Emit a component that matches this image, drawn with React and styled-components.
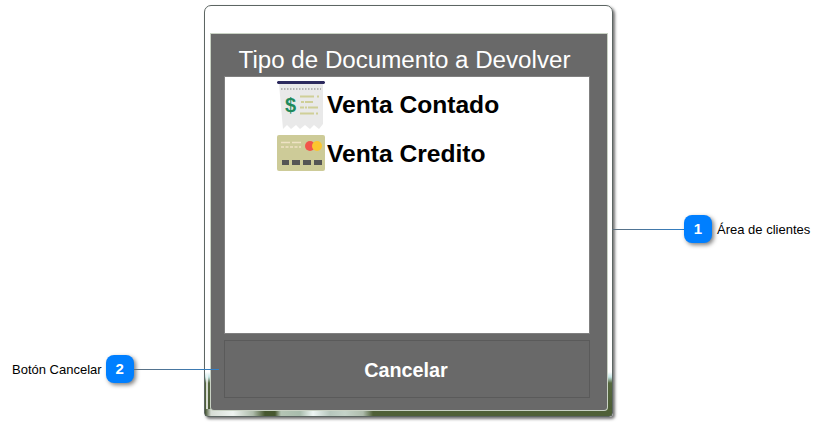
import React from "react";
import styled, { createGlobalStyle } from "styled-components";

const Global = createGlobalStyle`
  html, body { margin: 0; padding: 0; background: #fff; }
  body { font-family: "Liberation Sans", Arial, sans-serif; }
`;

const Stage = styled.div`
  position: relative;
  width: 827px;
  height: 426px;
  overflow: hidden;
  padding: 5px 0 0 204px;
  box-sizing: border-box;
`;

const Win = styled.div`
  position: relative;
  box-sizing: border-box;
  width: 409px;
  height: 412px;
  border: 1px solid #5d6663;
  border-radius: 7px 7px 4px 4px;
  box-shadow: 2px 2px 3px rgba(0, 0, 0, 0.55);
  padding: 28px 5px 6px 6px;
  background-repeat: no-repeat;
  background-image:
    linear-gradient(90deg,
      #3f4f2c 0, #d6dcd4 6px, #eef3f0 28px, #aebcab 48px, #46572f 60px, #46572f 70px,
      #b4c4b4 76px, #a8bcac 95px, #eef6f4 108px, #b6c6bc 125px, #c4d2c8 140px, #aebcac 158px,
      #4f6037 168px, #4f6037 100%),
    linear-gradient(180deg, rgba(255,255,255,0) 0, rgba(255,255,255,0) 366px, rgba(255,255,255,0.75) 372px, rgba(255,255,255,0.8) 100%),
    linear-gradient(180deg, #fff 0, #fff 366px, #c8e6e6 371px, #56683f 377px, #4a5a34 100%);
  background-size: 100% 7px, 2px 100%, 100% 100%;
  background-position: 0 100%, 1px 0, 0 0;
`;

const Panel = styled.div`
  box-sizing: border-box;
  height: 376px;
  background: #696969;
  padding: 0 17px 12px 13px;
  display: flex;
  flex-direction: column;
  border-radius: 0 0 3px 3px;
  box-shadow: 0 0 0 1px #c9d2c4;
`;

const Title = styled.div`
  height: 42px;
  line-height: 52px;
  margin-left: -5px;
  text-align: center;
  color: #fff;
  font-size: 24.15px;
  white-space: nowrap;
`;

const List = styled.div`
  box-sizing: border-box;
  height: 258px;
  background: #fff;
  border: 1px solid #808080;
  padding: 5px 0 0 52px;
  display: flex;
  flex-direction: column;
  gap: 3px;
`;

const Item = styled.div`
  display: flex;
  align-items: center;
  gap: 2px;
  height: 46px;
  font-size: 24.6px;
  font-weight: 700;
  color: #000;
`;

const IconBox = styled.svg`
  width: 48px;
  height: 48px;
  flex: none;
  display: block;
`;

const Cancel = styled.button`
  box-sizing: border-box;
  margin-top: 6px;
  height: 58px;
  background: #696969;
  border: 1px solid #5a5a5a;
  color: #fff;
  font: 700 19.8px "Liberation Sans", Arial, sans-serif;
  padding: 2px 2px 0 0;
`;

const Callout = styled.div`
  position: absolute;
  top: ${(p) => p.$top}px;
  left: ${(p) => p.$left}px;
  display: flex;
  align-items: center;
  height: 28px;
`;

const Badge = styled.div`
  width: 28px;
  height: 28px;
  border-radius: 8px;
  background: #007fff;
  color: #fff;
  font: 700 15px/28px "Liberation Sans", Arial, sans-serif;
  text-align: center;
  box-shadow: 2px 2px 4px rgba(0, 0, 0, 0.5);
  flex: none;
`;

const Leader = styled.div`
  width: ${(p) => p.$w}px;
  height: 1px;
  background: linear-gradient(${(p) => p.$dir}, #5f6f7c, #2f7fc8);
  flex: none;
`;

const Note = styled.span`
  font-size: 13px;
  color: #000;
  white-space: nowrap;
  margin: 0 4px 0 5px;
`;

const Receipt = () => (
  <IconBox viewBox="0 0 48 48">
    <path d="M0 1l1-1h46l1 1v1l-1 1H1L0 2z" fill="#2c2a5e" />
    <path d="M2 3h44v40l-4 5-5-4-4 4-5-4-5 4-4-4-5 4-4-4-4 4z" fill="#e9e9e9" />
    <path d="M4 8h40" stroke="#a2a2a2" strokeWidth="1.6" strokeDasharray="1.5 1.5" />
    <text x="8" y="31" fontFamily="Liberation Sans" fontSize="20" fontWeight="700" fill="#1f8a5c">$</text>
    <path d="M23 15.500h14M40 15.500h2M24 21h3M28 21h8M23 26.500h4M28 26.500h2M31 26.500h10M23 32.500h14M39 32.500h2" stroke="#cfcf98" strokeWidth="2" />
  </IconBox>
);

const Card = () => (
  <IconBox viewBox="0 0 48 48">
    <rect x="0" y="5" width="48" height="36" rx="2" fill="#cdcb98" />
    <path d="M4 12.500h9M15 12.500h9M4 17h3M8.500 17h3M13 17h3M17.500 17h3M22 17h2" stroke="#efe2c4" strokeWidth="1.6" />
    <circle cx="33" cy="16" r="5" fill="#f2544b" />
    <circle cx="40" cy="16" r="5" fill="#fcc62e" />
    <path d="M5 30h7v5H5zM15 30h8v5h-8zM26 30h8v5h-8zM37 30h8v5h-8z" fill="#555" />
  </IconBox>
);

export default function App() {
  return (
    <>
      <Global />
      <Stage>
        <Win>
          <Panel>
            <Title>Tipo de Documento a Devolver</Title>
            <List>
              <Item><Receipt />Venta Contado</Item>
              <Item><Card />Venta Credito</Item>
            </List>
            <Cancel>Cancelar</Cancel>
          </Panel>
        </Win>
        <Callout $top={215} $left={612}>
          <Leader $w={72} $dir="90deg" />
          <Badge>1</Badge>
          <Note>Área de clientes</Note>
        </Callout>
        <Callout $top={355} $left={7}>
          <Note>Botón Cancelar</Note>
          <Badge>2</Badge>
          <Leader $w={85} $dir="90deg" />
        </Callout>
      </Stage>
    </>
  );
}
